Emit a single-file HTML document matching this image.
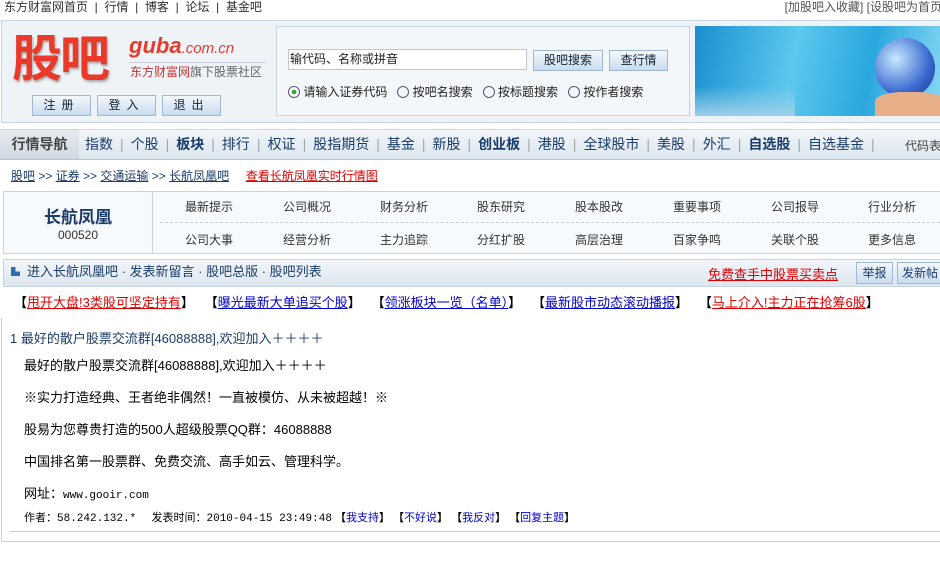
<!DOCTYPE html>
<html><head><meta charset="utf-8"><style>
*{margin:0;padding:0;box-sizing:border-box}
body{width:940px;height:569px;overflow:hidden;background:#fff;font-family:"Liberation Sans","Noto Sans CJK SC",sans-serif;font-size:12px;color:#333;position:relative}
.a{position:absolute;white-space:nowrap}
a{color:#333;text-decoration:none}
.u{text-decoration:underline}
.btn{position:absolute;border:1px solid #9fb8d3;background:linear-gradient(#f4f8fc,#c9dcef);text-align:center;color:#123;font-size:12px;line-height:18px}
.nav span{margin:0 7px}
.nav i{font-style:normal;color:#9aa;}
.menu div{position:absolute;width:98px;text-align:center;font-size:12px;color:#333}
</style></head><body>
<div class="a" style="left:4px;top:-2px;font-size:12px;color:#333">东方财富网首页 &nbsp;| &nbsp;行情 &nbsp;| &nbsp;博客 &nbsp;| &nbsp;论坛 &nbsp;| &nbsp;基金吧</div>
<div class="a" style="right:-2px;top:-2px;color:#555">[加股吧入收藏] [设股吧为首页</div>

<div class="a" style="left:1px;top:20px;width:945px;height:103px;border:1px solid #c6d5e4;background:#eef3f8"></div>
<div class="a" style="left:12px;top:26px;font-size:50px;line-height:58px;font-weight:bold;color:#e8392a;font-family:'Noto Sans CJK SC',sans-serif;text-shadow:1px 2px 2px #aaa;letter-spacing:-2px">股吧</div>
<div class="a" style="left:129px;top:33px;font-size:22px;font-weight:bold;font-style:italic;color:#e83a2b">guba<span style="font-size:15px;font-weight:normal">.com.cn</span></div>
<div class="a" style="left:129px;top:62px;width:137px;border-top:1px solid #ccd;"></div>
<div class="a" style="left:130px;top:63px;font-size:12px;color:#c33">东方财富网<span style="color:#666">旗下股票社区</span></div>
<div class="btn" style="left:32px;top:95px;width:59px;height:21px;letter-spacing:6px">注册</div>
<div class="btn" style="left:97px;top:95px;width:59px;height:21px;letter-spacing:6px">登入</div>
<div class="btn" style="left:162px;top:95px;width:59px;height:21px;letter-spacing:6px">退出</div>

<div class="a" style="left:276px;top:26px;width:414px;height:90px;border:1px solid #c6d5e4;background:#f4f7fa"></div>
<div class="a" style="left:288px;top:49px;width:239px;height:21px;border:1px solid #bcc8d4;background:#fff;padding-left:1px;line-height:18px;font-size:12px;color:#222">输代码、名称或拼音</div>
<div class="btn" style="left:533px;top:50px;width:70px;height:21px">股吧搜索</div>
<div class="btn" style="left:609px;top:50px;width:59px;height:21px">查行情</div>
<div class="a" style="left:288px;top:83px;font-size:12px;color:#222;line-height:18px">
<span style="display:inline-block;width:12px;height:12px;border:1px solid #557;border-radius:50%;vertical-align:-2px;background:radial-gradient(#3a3 30%,#fff 36%)"></span> 请输入证券代码 &nbsp;
<span style="display:inline-block;width:12px;height:12px;border:1px solid #557;border-radius:50%;vertical-align:-2px"></span> 按吧名搜索 &nbsp;
<span style="display:inline-block;width:12px;height:12px;border:1px solid #557;border-radius:50%;vertical-align:-2px"></span> 按标题搜索 &nbsp;
<span style="display:inline-block;width:12px;height:12px;border:1px solid #557;border-radius:50%;vertical-align:-2px"></span> 按作者搜索</div>

<div class="a" style="left:695px;top:26px;width:245px;height:90px;background:linear-gradient(100deg,#1a8fd0,#5cc8ee 40%,#2aa7de 70%,#86d8f4);overflow:hidden">
<div style="position:absolute;left:0;bottom:0;width:100px;height:30px;background:linear-gradient(transparent,#9ccfe8)"></div>
<div style="position:absolute;left:180px;top:12px;width:60px;height:60px;border-radius:50%;background:radial-gradient(circle at 35% 35%,#c8eaff,#3a6ad0 60%,#1c2f8c)"></div>
<div style="position:absolute;left:180px;top:66px;width:70px;height:24px;border-radius:40% 40% 0 0;background:#e8b088"></div>
</div>

<div class="a" style="left:0;top:129px;width:940px;height:31px;background:linear-gradient(#f2f6fa,#dbe5ee);border-top:1px solid #c8d5e2;border-bottom:1px solid #b7c7d7"></div>
<div class="a" style="left:0;top:130px;width:79px;height:29px;background:linear-gradient(#e6ebf0,#cfd8e1);font-size:14px;font-weight:bold;color:#444;line-height:29px;text-align:center">行情导航</div>
<div class="a nav" style="left:78px;top:130px;line-height:29px;font-size:14px;color:#1a3c6a"><span>指数</span><i>|</i><span>个股</span><i>|</i><span><b>板块</b></span><i>|</i><span>排行</span><i>|</i><span>权证</span><i>|</i><span>股指期货</span><i>|</i><span>基金</span><i>|</i><span>新股</span><i>|</i><span><b>创业板</b></span><i>|</i><span>港股</span><i>|</i><span>全球股市</span><i>|</i><span>美股</span><i>|</i><span>外汇</span><i>|</i><span><b>自选股</b></span><i>|</i><span>自选基金</span><i>|</i></div>
<div class="a" style="left:905px;top:137px;font-size:12px;color:#444">代码表</div>

<div class="a" style="left:11px;top:167px;font-size:12px;color:#1a3c6a"><a class="u" style="color:#1a3c6a">股吧</a> &gt;&gt; <a class="u" style="color:#1a3c6a">证券</a> &gt;&gt; <a class="u" style="color:#1a3c6a">交通运输</a> &gt;&gt; <a class="u" style="color:#1a3c6a">长航凤凰吧</a> &nbsp; &nbsp; <a class="u" style="color:#d00">查看长航凤凰实时行情图</a></div>

<div class="a" style="left:3px;top:191px;width:940px;height:63px;border:1px solid #c6d5e4;background:#f7fafd"></div>
<div class="a" style="left:152px;top:191px;width:1px;height:63px;background:#c6d5e4"></div>
<div class="a" style="left:4px;top:203px;width:148px;text-align:center;font-size:17px;font-weight:bold;color:#1a3c6a">长航凤凰</div>
<div class="a" style="left:4px;top:228px;width:148px;text-align:center;font-size:12px;color:#333">000520</div>
<div class="a" style="left:160px;top:222px;width:780px;border-top:1px dashed #c6d0da"></div>
<div class="menu">
<div style="left:160px;top:198px">最新提示</div><div style="left:258px;top:198px">公司概况</div><div style="left:355px;top:198px">财务分析</div><div style="left:452px;top:198px">股东研究</div><div style="left:550px;top:198px">股本股改</div><div style="left:648px;top:198px">重要事项</div><div style="left:746px;top:198px">公司报导</div><div style="left:843px;top:198px">行业分析</div>
<div style="left:160px;top:231px">公司大事</div><div style="left:258px;top:231px">经营分析</div><div style="left:355px;top:231px">主力追踪</div><div style="left:452px;top:231px">分红扩股</div><div style="left:550px;top:231px">高层治理</div><div style="left:648px;top:231px">百家争鸣</div><div style="left:746px;top:231px">关联个股</div><div style="left:843px;top:231px">更多信息</div>
</div>

<div class="a" style="left:3px;top:259px;width:940px;height:28px;border:1px solid #c6d5e4;background:linear-gradient(#f2f6fa,#dde6ef)"></div>
<div class="a" style="left:11px;top:267px;width:9px;height:9px;background:#2a6db0;clip-path:polygon(0 0,50% 0,50% 50%,100% 50%,100% 100%,0 100%)"></div>
<div class="a" style="left:27px;top:262px;font-size:13px;color:#1a3c6a;line-height:20px">进入长航凤凰吧 · 发表新留言 · 股吧总版 · 股吧列表</div>
<div class="a u" style="left:708px;top:264px;font-size:13px;color:#d00">免费查手中股票买卖点</div>
<div class="btn" style="left:856px;top:262px;width:37px;height:22px;line-height:20px;color:#1a3c6a">举报</div>
<div class="btn" style="left:897px;top:262px;width:46px;height:22px;line-height:20px;color:#1a3c6a">发新帖</div>

<div class="a" style="left:14px;top:293px;font-size:13px;line-height:20px;color:#000"><b>【</b><a class="u" style="color:#d00">甩开大盘!3类股可坚定持有</a><b>】</b> &nbsp; <b>【</b><a class="u" style="color:#00c">曝光最新大单追买个股</a><b>】</b> &nbsp; <b>【</b><a class="u" style="color:#00c">领涨板块一览（名单）</a><b>】</b> &nbsp; <b>【</b><a class="u" style="color:#00c">最新股市动态滚动播报</a><b>】</b> &nbsp; <b>【</b><a class="u" style="color:#d00">马上介入!主力正在抢筹6股</a><b>】</b></div>

<div class="a" style="left:1px;top:318px;width:1px;height:224px;background:#c6d5e4"></div>
<div class="a" style="left:1px;top:541px;width:940px;height:1px;background:#c6d5e4"></div>
<div class="a" style="left:10px;top:328px;font-size:13px;color:#1a3c6a">1 最好的散户股票交流群[46088888],欢迎加入＋＋＋＋</div>
<div class="a" style="left:24px;top:355px;font-size:13px;color:#000">最好的散户股票交流群[46088888],欢迎加入＋＋＋＋</div>
<div class="a" style="left:24px;top:387px;font-size:13px;color:#000">※实力打造经典、王者绝非偶然！一直被模仿、从未被超越！※</div>
<div class="a" style="left:24px;top:419px;font-size:13px;color:#000">股易为您尊贵打造的500人超级股票QQ群：46088888</div>
<div class="a" style="left:24px;top:451px;font-size:13px;color:#000">中国排名第一股票群、免费交流、高手如云、管理科学。</div>
<div class="a" style="left:24px;top:483px;font-size:13px;color:#000">网址：<span style="font-family:'Liberation Mono',monospace;font-size:11px">www.gooir.com</span></div>
<div class="a" style="left:24px;top:509px;font-size:11px;color:#000">作者：<span style="font-family:'Liberation Mono',monospace">58.242.132.*</span> &nbsp; &nbsp; 发表时间：<span style="font-family:'Liberation Mono',monospace">2010-04-15 23:49:48</span> <b>【</b><span style="color:#00c">我支持</span><b>】</b> <b>【</b><span style="color:#00c">不好说</span><b>】</b> <b>【</b><span style="color:#00c">我反对</span><b>】</b> <b>【</b><span style="color:#00c">回复主题</span><b>】</b></div>
<div class="a" style="left:10px;top:531px;width:930px;height:1px;background:#c6d0da"></div>
</body></html>
